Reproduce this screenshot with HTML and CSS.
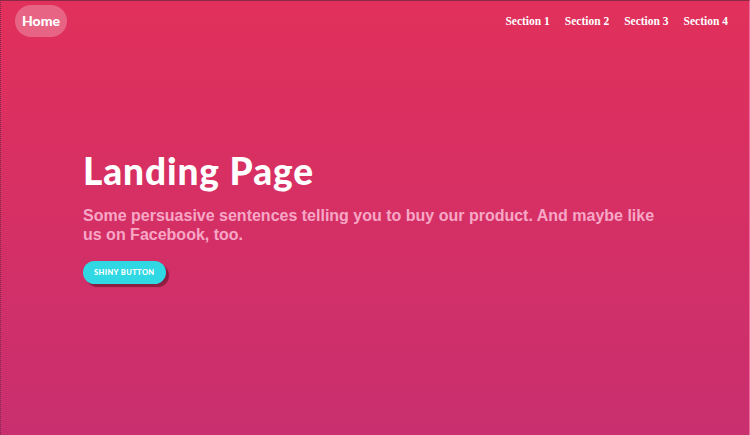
FILE: index.html
```html
<!DOCTYPE html>
<html>
<head>
<meta charset="utf-8">
<link rel="stylesheet" href="styles.css">
</head>
<body>
<div class="page">
  <header class="topbar">
    <a class="home">Home</a>
    <nav class="nav">
      <a>Section 1</a>
      <a>Section 2</a>
      <a>Section 3</a>
      <a>Section 4</a>
    </nav>
  </header>
  <main class="hero">
    <h1 class="title">Landing Page</h1>
    <p class="lead">Some persuasive sentences telling you to buy our product. And maybe like us on Facebook, too.</p>
    <a class="btn">Shiny Button</a>
  </main>
</div>
</body>
</html>
```
FILE: styles.css
```css
html, body {
  margin: 0;
  padding: 0;
  height: 100%;
}
body {
  background: #d42f64;
}
.page {
  box-sizing: border-box;
  height: 435px;
  background: linear-gradient(180deg, #e1305b 0%, #c92f6f 100%);
  border-top: 1px solid #8c2a45;
  border-left: 1px dotted #7a2a48;
  border-right: 1px solid #f06aa0;
  display: flex;
  flex-direction: column;
}
.topbar {
  display: flex;
  justify-content: space-between;
  align-items: center;
  padding: 4px 21px 0 14px;
}
.home {
  font-family: "Lato", sans-serif;
  font-weight: 900;
  font-size: 14px;
  color: #fff;
  background: rgba(255,255,255,0.25);
  border-radius: 16px;
  padding: 8px 7px;
  line-height: 16px;
}
.nav {
  display: flex;
  gap: 15px;
  margin-top: -1px;
}
.nav a {
  font-family: "Liberation Serif", serif;
  font-weight: bold;
  font-size: 11.5px;
  color: #fff;
}
.hero {
  padding: 112px 0 0 82px;
}
.title {
  margin: 0;
  font-family: "Lato", sans-serif;
  font-weight: 900;
  font-size: 37px;
  line-height: 44px;
  letter-spacing: 0.9px;
  color: #fff;
}
.lead {
  margin: 13px 0 0;
  width: 580px;
  font-family: "Liberation Sans", Arial, sans-serif;
  font-weight: bold;
  font-size: 16px;
  line-height: 19px;
  color: #f7a7c6;
}
.btn {
  display: inline-block;
  margin-top: 17px;
  background: #2fd8e2;
  color: #fff;
  font-family: "Lato", sans-serif;
  font-weight: 900;
  font-size: 7.5px;
  letter-spacing: 0.4px;
  text-transform: uppercase;
  border-radius: 12px;
  padding: 7px 11px;
  line-height: 9px;
  box-shadow: 3px 3px 1px rgba(90,20,40,0.6);
}
```
